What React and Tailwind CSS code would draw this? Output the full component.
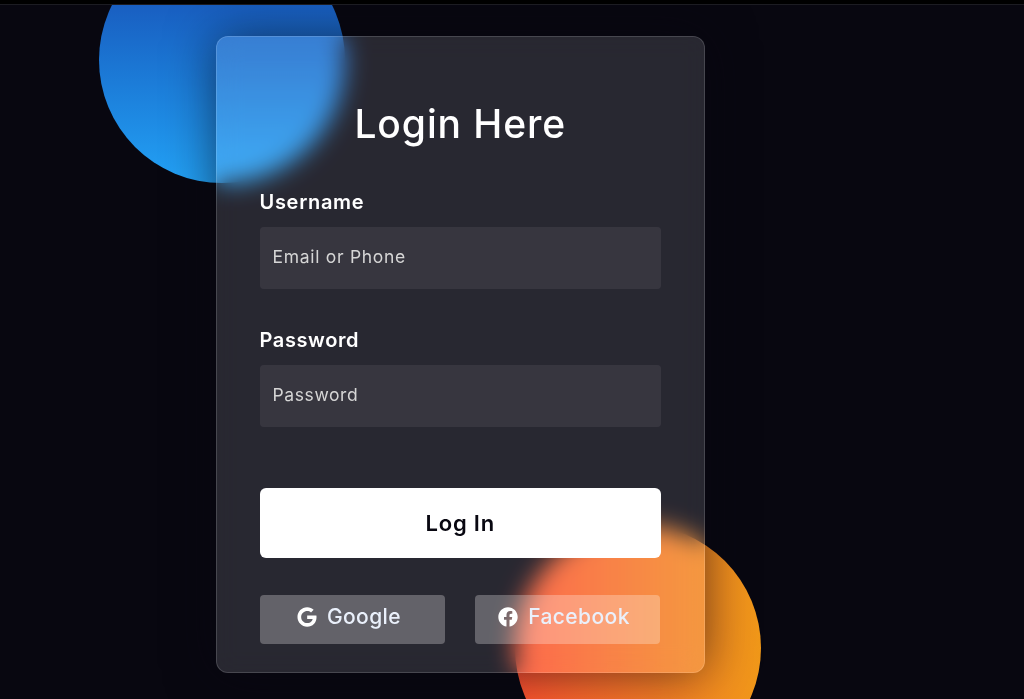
import { FaFacebook, FaGoogle } from "react-icons/fa"

function App() {
  return (
    <div className="h-[699px] w-full overflow-hidden bg-black font-['Inter','Liberation_Sans',sans-serif]">
      <div className="relative mt-[4px] h-[695px] overflow-hidden border-t border-[#1c1c22] bg-[#080710] pl-[216px] pt-[31px]">
        {/* Shapes behind the card */}
        <div className="absolute left-[99px] top-[-68px] h-[246px] w-[246px] rounded-full bg-linear-to-b from-[#1845ad] to-[#23a2f6]"></div>
        <div className="absolute left-[515px] top-[520px] h-[246px] w-[246px] rounded-full bg-linear-to-r from-[#ff512f] to-[#f09819]"></div>

        <form className="relative h-[637px] w-[489px] rounded-[12px] border-[1.5px] border-white/15 bg-[#f4f0ff]/14 pl-[42.5px] pr-[43px] pt-[61.5px] shadow-[0_0_49px_rgba(8,7,16,0.6)] backdrop-blur-[12px]">
          <h1 className="text-center text-[39px] leading-[50px] font-medium tracking-[0.9px] text-white">Login Here</h1>

          <label className="mt-[38px] block text-[20px] leading-[30px] font-semibold tracking-[0.7px] text-white">Username</label>
          <input
            type="text"
            placeholder="Email or Phone"
            className="mt-[10px] block h-[62px] w-full rounded-[4px] bg-white/7 px-[13px] pb-[2px] text-[17.5px] tracking-[0.7px] text-white placeholder:text-[#d6d6d6]"
          />

          <label className="mt-[36px] block text-[20px] leading-[30px] font-semibold tracking-[0.6px] text-white">Password</label>
          <input
            type="password"
            placeholder="Password"
            className="mt-[10px] block h-[62px] w-full rounded-[4px] bg-white/7 px-[13px] pb-[2px] text-[17.5px] tracking-[0.6px] text-white placeholder:text-[#d6d6d6]"
          />

          <button type="button" className="mt-[61px] block h-[70px] w-full rounded-[6px] bg-white pt-[1px] text-[22px] font-semibold tracking-[0.8px] text-[#080710]">
            Log In
          </button>

          <div className="mt-[37px] flex gap-[30px]">
            <div className="flex h-[49px] w-[185px] items-center justify-center gap-[10px] rounded-[4px] bg-white/27 pr-[6px] pb-[4px] text-[21px] font-medium tracking-[0.4px] text-[#eaf0fb]">
              <FaGoogle className="text-[20px] text-white" />
              Google
            </div>
            <div className="flex h-[49px] w-[185px] items-center justify-center gap-[10px] rounded-[4px] bg-white/27 pr-[6px] pb-[4px] text-[21px] font-medium tracking-[0.4px] text-[#eaf0fb]">
              <FaFacebook className="text-[20px] text-white" />
              Facebook
            </div>
          </div>
        </form>
      </div>
    </div>
  )
}

export default App
